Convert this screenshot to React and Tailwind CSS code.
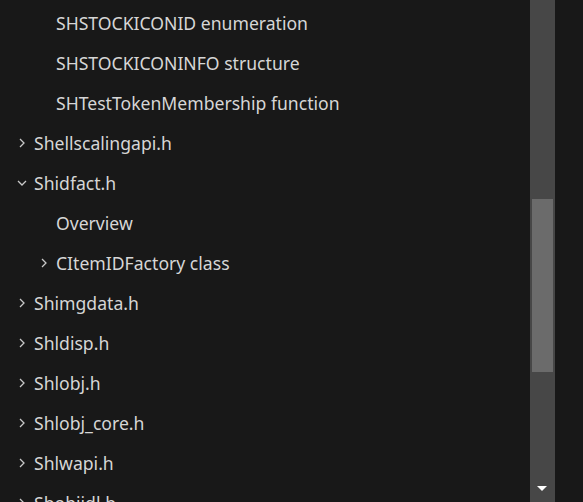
import React from 'react';

const items = [
    { label: 'SHSTOCKICONID enumeration', level: 2 },
    { label: 'SHSTOCKICONINFO structure', level: 2 },
    { label: 'SHTestTokenMembership function', level: 2 },
    { label: 'Shellscalingapi.h', level: 1, chevron: 'right' },
    { label: 'Shidfact.h', level: 1, chevron: 'down' },
    { label: 'Overview', level: 2 },
    { label: 'CItemIDFactory class', level: 2, chevron: 'right' },
    { label: 'Shimgdata.h', level: 1, chevron: 'right' },
    { label: 'Shldisp.h', level: 1, chevron: 'right' },
    { label: 'Shlobj.h', level: 1, chevron: 'right' },
    { label: 'Shlobj_core.h', level: 1, chevron: 'right' },
    { label: 'Shlwapi.h', level: 1, chevron: 'right' },
    { label: 'Shobjidl.h', level: 1, chevron: 'right' },
];

const Chevron = ({ dir }) => (
    <svg width="10" height="10" viewBox="0 0 10 10" className="shrink-0">
        {dir === 'right' ? (
            <path d="M3 1 L7 5 L3 9" fill="none" stroke="#c8c8c8" strokeWidth="1.3" />
        ) : (
            <path d="M1 3 L5 7 L9 3" fill="none" stroke="#c8c8c8" strokeWidth="1.3" />
        )}
    </svg>
);

const Row = ({ item }) => {
    // level 1: chevron at 18, text at 34; level 2: chevron at 40, text at 56
    const pad = item.level === 1 ? 'pl-[17px]' : 'pl-[39px]';
    return (
        <div className={`h-[40px] flex items-center ${pad} gap-[7px] text-[#d6d6d6] whitespace-nowrap`}>
            <span className="w-[10px] flex justify-center">
                {item.chevron && <Chevron dir={item.chevron} />}
            </span>
            <span>{item.label}</span>
        </div>
    );
};

export default function App() {
    return (
        <div
            className="w-[583px] h-[502px] bg-[#181818] flex overflow-hidden text-[17.6px]"
            style={{ fontFamily: '"Noto Sans", "Open Sans", sans-serif' }}
        >
            <div className="flex-1 pt-[3px] overflow-hidden">
                {items.map((item) => (
                    <Row key={item.label} item={item} />
                ))}
            </div>
            <div className="w-[25px] h-full bg-[#474747] flex flex-col items-center relative">
                <div className="mt-[199px] w-[21px] h-[173px] bg-[#6b6b6b]" />
                <div className="absolute bottom-[11px] left-[7px] w-0 h-0 border-l-[5.5px] border-r-[5.5px] border-t-[5px] border-l-transparent border-r-transparent border-t-white" />
            </div>
            <div className="w-[28px]" />
        </div>
    );
}
